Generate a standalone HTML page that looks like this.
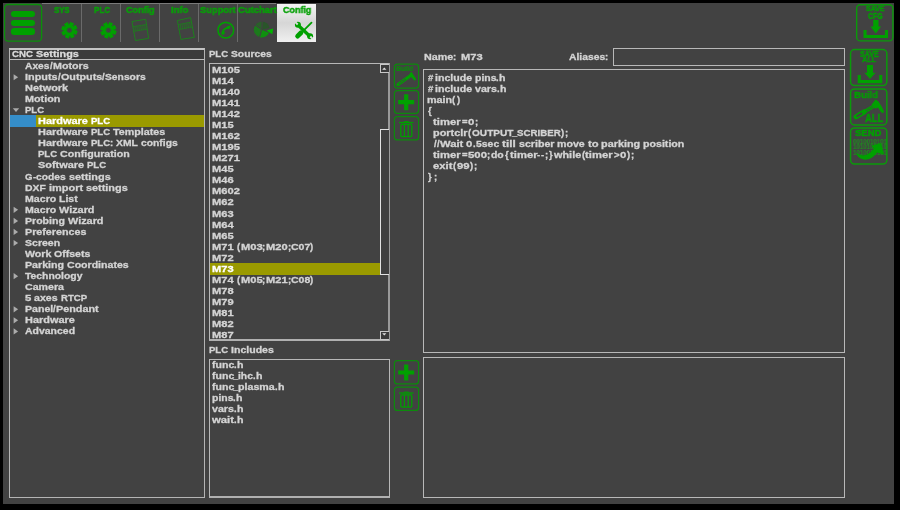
<!DOCTYPE html>
<html><head><meta charset="utf-8"><style>
html,body{margin:0;padding:0;background:#000;width:900px;height:510px;overflow:hidden}
#m{position:absolute;left:3px;top:3px;width:891px;height:501px;background:#424242}
.r{position:absolute}
.clip{position:absolute;overflow:hidden}
.t{position:absolute;white-space:nowrap;font-family:"Liberation Sans",sans-serif;font-weight:bold;transform-origin:0 0;-webkit-text-stroke:0.3px currentColor;will-change:transform}
svg{position:absolute;left:0;top:0}
</style></head><body>
<div id="m"></div>
<div class="r" style="left:42px;top:3px;width:234px;height:1px;background:#7a7a7a"></div><div class="r" style="left:10.5px;top:10.7px;width:24.5px;height:6.3px;background:#00a000;border-radius:3.2px"></div><div class="r" style="left:10.5px;top:19.5px;width:24.5px;height:6.3px;background:#00a000;border-radius:3.2px"></div><div class="r" style="left:10.5px;top:28.4px;width:24.5px;height:6.3px;background:#00a000;border-radius:3.2px"></div><div class="r" style="left:81px;top:4px;width:1px;height:38px;background:#6a6a6a"></div><div class="r" style="left:120px;top:4px;width:1px;height:38px;background:#6a6a6a"></div><div class="r" style="left:159px;top:4px;width:1px;height:38px;background:#6a6a6a"></div><div class="r" style="left:198px;top:4px;width:1px;height:38px;background:#6a6a6a"></div><div class="r" style="left:237px;top:4px;width:1px;height:38px;background:#6a6a6a"></div><div class="r" style="left:276.5px;top:4px;width:39.5px;height:38px;background:linear-gradient(#f4f4f4,#d6d6d6 50%,#f0f0f0)"></div><div class="t" style="left:53.80px;top:4.66px;font-size:9.74px;line-height:9.74px;color:#08a008;transform:scaleX(0.7973);-webkit-text-stroke:0.45px currentColor">SYS</div><div class="t" style="left:94.20px;top:4.66px;font-size:9.74px;line-height:9.74px;color:#08a008;transform:scaleX(0.8230);-webkit-text-stroke:0.45px currentColor">PLC</div><div class="t" style="left:126.10px;top:4.66px;font-size:9.74px;line-height:9.74px;color:#08a008;transform:scaleX(0.9298);-webkit-text-stroke:0.45px currentColor">Config</div><div class="t" style="left:171.10px;top:4.66px;font-size:9.74px;line-height:9.74px;color:#08a008;transform:scaleX(0.9652);-webkit-text-stroke:0.45px currentColor">Info</div><div class="t" style="left:200.40px;top:4.66px;font-size:9.74px;line-height:9.74px;color:#08a008;transform:scaleX(0.9554);-webkit-text-stroke:0.45px currentColor">Support</div><div class="t" style="left:237.80px;top:4.66px;font-size:9.74px;line-height:9.74px;color:#08a008;transform:scaleX(0.9685);-webkit-text-stroke:0.45px currentColor">Cutchart</div><div class="t" style="left:282.50px;top:4.66px;font-size:9.74px;line-height:9.74px;color:#08a008;transform:scaleX(0.9200);-webkit-text-stroke:0.45px currentColor">Config</div><div class="t" style="left:865.70px;top:5.38px;font-size:7.70px;line-height:7.70px;color:#00a000;transform:scaleX(0.9069);-webkit-text-stroke:0.42px currentColor">SAVE</div><div class="t" style="left:867.90px;top:11.86px;font-size:8.43px;line-height:8.43px;color:#00a000;transform:scaleX(0.8155);-webkit-text-stroke:0.42px currentColor">CFG</div><div class="r" style="left:9px;top:48px;width:196px;height:450px;border:1px solid #b4b4b4;border-top:2px solid #c4c4c4;box-sizing:border-box"></div><div class="r" style="left:10px;top:50px;width:194px;height:9px;background:#3b3b3b"></div><div class="r" style="left:10px;top:59px;width:194px;height:1px;background:#bdbdbd"></div><div class="clip" style="left:10px;top:49px;width:193px;height:10px"><div class="t" style="left:2.00px;top:0.00px;font-size:9.5px;line-height:9.5px;color:#dcdcdc;transform:scaleX(1.0158)">CNC</div><div class="t" style="left:25.88px;top:0.00px;font-size:9.5px;line-height:9.5px;color:#dcdcdc;transform:scaleX(1.1427)">Settings</div></div><div class="t" style="left:25.00px;top:61.00px;font-size:9.5px;line-height:9.5px;color:#d4d4d4;transform:scaleX(1.0755)">Axes</div><div class="t" style="left:49.56px;top:61px;font-size:9.5px;line-height:9.5px;color:#d4d4d4">/</div><div class="t" style="left:52.52px;top:61.00px;font-size:9.5px;line-height:9.5px;color:#d4d4d4;transform:scaleX(1.1276)">Motors</div><div class="t" style="left:25.00px;top:72.00px;font-size:9.5px;line-height:9.5px;color:#d4d4d4;transform:scaleX(1.1413)">Inputs</div><div class="t" style="left:57.59px;top:72px;font-size:9.5px;line-height:9.5px;color:#d4d4d4">/</div><div class="t" style="left:60.55px;top:72.00px;font-size:9.5px;line-height:9.5px;color:#d4d4d4;transform:scaleX(1.1315)">Outputs</div><div class="t" style="left:101.74px;top:72px;font-size:9.5px;line-height:9.5px;color:#d4d4d4">/</div><div class="t" style="left:104.71px;top:72.00px;font-size:9.5px;line-height:9.5px;color:#d4d4d4;transform:scaleX(1.0843)">Sensors</div><div class="t" style="left:25.00px;top:83.00px;font-size:9.5px;line-height:9.5px;color:#d4d4d4;transform:scaleX(1.1527)">Network</div><div class="t" style="left:25.00px;top:94.00px;font-size:9.5px;line-height:9.5px;color:#d4d4d4;transform:scaleX(1.1373)">Motion</div><div class="t" style="left:25.00px;top:105.00px;font-size:9.5px;line-height:9.5px;color:#d4d4d4;transform:scaleX(1.0046)">PLC</div><div class="r" style="left:10px;top:115px;width:26px;height:11.5px;background:#358dc8"></div><div class="r" style="left:36px;top:115px;width:168px;height:11.5px;background:#9a9a00"></div><div class="t" style="left:38.00px;top:116.00px;font-size:9.5px;line-height:9.5px;color:#ffffff;transform:scaleX(1.1504)">Hardware</div><div class="t" style="left:90.55px;top:116.00px;font-size:9.5px;line-height:9.5px;color:#ffffff;transform:scaleX(1.0046)">PLC</div><div class="t" style="left:38.00px;top:127.00px;font-size:9.5px;line-height:9.5px;color:#d4d4d4;transform:scaleX(1.1504)">Hardware</div><div class="t" style="left:90.55px;top:127.00px;font-size:9.5px;line-height:9.5px;color:#d4d4d4;transform:scaleX(1.0046)">PLC</div><div class="t" style="left:112.62px;top:127.00px;font-size:9.5px;line-height:9.5px;color:#d4d4d4;transform:scaleX(1.1279)">Templates</div><div class="t" style="left:38.00px;top:138.00px;font-size:9.5px;line-height:9.5px;color:#d4d4d4;transform:scaleX(1.1504)">Hardware</div><div class="t" style="left:90.55px;top:138.00px;font-size:9.5px;line-height:9.5px;color:#d4d4d4;transform:scaleX(1.0046)">PLC</div><div class="t" style="left:109.70px;top:138px;font-size:9.5px;line-height:9.5px;color:#d4d4d4">:</div><div class="t" style="left:116.22px;top:138.00px;font-size:9.5px;line-height:9.5px;color:#d4d4d4;transform:scaleX(1.0873)">XML</div><div class="t" style="left:140.98px;top:138.00px;font-size:9.5px;line-height:9.5px;color:#d4d4d4;transform:scaleX(1.0861)">configs</div><div class="t" style="left:38.00px;top:149.00px;font-size:9.5px;line-height:9.5px;color:#d4d4d4;transform:scaleX(1.0046)">PLC</div><div class="t" style="left:60.07px;top:149.00px;font-size:9.5px;line-height:9.5px;color:#d4d4d4;transform:scaleX(1.1203)">Configuration</div><div class="t" style="left:38.00px;top:160.00px;font-size:9.5px;line-height:9.5px;color:#d4d4d4;transform:scaleX(1.1511)">Software</div><div class="t" style="left:86.95px;top:160.00px;font-size:9.5px;line-height:9.5px;color:#d4d4d4;transform:scaleX(1.0046)">PLC</div><div class="t" style="left:25.00px;top:172.00px;font-size:9.5px;line-height:9.5px;color:#d4d4d4;transform:scaleX(1.0078)">G</div><div class="t" style="left:32.67px;top:172px;font-size:9.5px;line-height:9.5px;color:#d4d4d4">-</div><div class="t" style="left:36.12px;top:172.00px;font-size:9.5px;line-height:9.5px;color:#d4d4d4;transform:scaleX(1.0801)">codes</div><div class="t" style="left:68.68px;top:172.00px;font-size:9.5px;line-height:9.5px;color:#d4d4d4;transform:scaleX(1.1446)">settings</div><div class="t" style="left:25.00px;top:183.00px;font-size:9.5px;line-height:9.5px;color:#d4d4d4;transform:scaleX(1.0906)">DXF</div><div class="t" style="left:48.69px;top:183.00px;font-size:9.5px;line-height:9.5px;color:#d4d4d4;transform:scaleX(1.1539)">import</div><div class="t" style="left:85.65px;top:183.00px;font-size:9.5px;line-height:9.5px;color:#d4d4d4;transform:scaleX(1.1446)">settings</div><div class="t" style="left:25.00px;top:194.00px;font-size:9.5px;line-height:9.5px;color:#d4d4d4;transform:scaleX(1.1163)">Macro</div><div class="t" style="left:59.12px;top:194.00px;font-size:9.5px;line-height:9.5px;color:#d4d4d4;transform:scaleX(1.1029)">List</div><div class="t" style="left:25.00px;top:205.00px;font-size:9.5px;line-height:9.5px;color:#d4d4d4;transform:scaleX(1.1163)">Macro</div><div class="t" style="left:59.12px;top:205.00px;font-size:9.5px;line-height:9.5px;color:#d4d4d4;transform:scaleX(1.1427)">Wizard</div><div class="t" style="left:25.00px;top:216.00px;font-size:9.5px;line-height:9.5px;color:#d4d4d4;transform:scaleX(1.1122)">Probing</div><div class="t" style="left:67.73px;top:216.00px;font-size:9.5px;line-height:9.5px;color:#d4d4d4;transform:scaleX(1.1427)">Wizard</div><div class="t" style="left:25.00px;top:227.00px;font-size:9.5px;line-height:9.5px;color:#d4d4d4;transform:scaleX(1.1285)">Preferences</div><div class="t" style="left:25.00px;top:238.00px;font-size:9.5px;line-height:9.5px;color:#d4d4d4;transform:scaleX(1.1092)">Screen</div><div class="t" style="left:25.00px;top:249.00px;font-size:9.5px;line-height:9.5px;color:#d4d4d4;transform:scaleX(1.1206)">Work</div><div class="t" style="left:54.35px;top:249.00px;font-size:9.5px;line-height:9.5px;color:#d4d4d4;transform:scaleX(1.1106)">Offsets</div><div class="t" style="left:25.00px;top:260.00px;font-size:9.5px;line-height:9.5px;color:#d4d4d4;transform:scaleX(1.1220)">Parking</div><div class="t" style="left:66.92px;top:260.00px;font-size:9.5px;line-height:9.5px;color:#d4d4d4;transform:scaleX(1.1127)">Coordinates</div><div class="t" style="left:25.00px;top:271.00px;font-size:9.5px;line-height:9.5px;color:#d4d4d4;transform:scaleX(1.0914)">Technology</div><div class="t" style="left:25.00px;top:282.00px;font-size:9.5px;line-height:9.5px;color:#d4d4d4;transform:scaleX(1.1184)">Camera</div><div class="t" style="left:25.00px;top:293.00px;font-size:9.5px;line-height:9.5px;color:#d4d4d4;transform:scaleX(1.1948)">5</div><div class="t" style="left:34.40px;top:293.00px;font-size:9.5px;line-height:9.5px;color:#d4d4d4;transform:scaleX(1.1132)">axes</div><div class="t" style="left:60.87px;top:293.00px;font-size:9.5px;line-height:9.5px;color:#d4d4d4;transform:scaleX(1.0082)">RTCP</div><div class="t" style="left:25.00px;top:304.00px;font-size:9.5px;line-height:9.5px;color:#d4d4d4;transform:scaleX(1.1145)">Panel</div><div class="t" style="left:53.35px;top:304px;font-size:9.5px;line-height:9.5px;color:#d4d4d4">/</div><div class="t" style="left:56.31px;top:304.00px;font-size:9.5px;line-height:9.5px;color:#d4d4d4;transform:scaleX(1.1386)">Pendant</div><div class="t" style="left:25.00px;top:315.00px;font-size:9.5px;line-height:9.5px;color:#d4d4d4;transform:scaleX(1.1504)">Hardware</div><div class="t" style="left:25.00px;top:326.00px;font-size:9.5px;line-height:9.5px;color:#d4d4d4;transform:scaleX(1.1019)">Advanced</div><div class="t" style="left:209.40px;top:49.00px;font-size:9.5px;line-height:9.5px;color:#d4d4d4;transform:scaleX(1.0046)">PLC</div><div class="t" style="left:231.47px;top:49.00px;font-size:9.5px;line-height:9.5px;color:#d4d4d4;transform:scaleX(1.0837)">Sources</div><div class="r" style="left:208.5px;top:63px;width:181px;height:277.5px;border:1px solid #b8b8b8;border-right:2px solid #9a9a9a;border-bottom:2px solid #b0b0b0;box-sizing:border-box"></div><div class="clip" style="left:209.5px;top:64px;width:178px;height:275px"><div class="t" style="left:2.50px;top:1.00px;font-size:9.5px;line-height:9.5px;color:#d4d4d4;transform:scaleX(1.1768)">M105</div><div class="t" style="left:2.50px;top:12.00px;font-size:9.5px;line-height:9.5px;color:#d4d4d4;transform:scaleX(1.1717)">M14</div><div class="t" style="left:2.50px;top:23.00px;font-size:9.5px;line-height:9.5px;color:#d4d4d4;transform:scaleX(1.1768)">M140</div><div class="t" style="left:2.50px;top:34.00px;font-size:9.5px;line-height:9.5px;color:#d4d4d4;transform:scaleX(1.1768)">M141</div><div class="t" style="left:2.50px;top:45.00px;font-size:9.5px;line-height:9.5px;color:#d4d4d4;transform:scaleX(1.1768)">M142</div><div class="t" style="left:2.50px;top:56.00px;font-size:9.5px;line-height:9.5px;color:#d4d4d4;transform:scaleX(1.1717)">M15</div><div class="t" style="left:2.50px;top:67.00px;font-size:9.5px;line-height:9.5px;color:#d4d4d4;transform:scaleX(1.1768)">M162</div><div class="t" style="left:2.50px;top:78.00px;font-size:9.5px;line-height:9.5px;color:#d4d4d4;transform:scaleX(1.1768)">M195</div><div class="t" style="left:2.50px;top:89.00px;font-size:9.5px;line-height:9.5px;color:#d4d4d4;transform:scaleX(1.1768)">M271</div><div class="t" style="left:2.50px;top:100.00px;font-size:9.5px;line-height:9.5px;color:#d4d4d4;transform:scaleX(1.1717)">M45</div><div class="t" style="left:2.50px;top:111.00px;font-size:9.5px;line-height:9.5px;color:#d4d4d4;transform:scaleX(1.1717)">M46</div><div class="t" style="left:2.50px;top:122.00px;font-size:9.5px;line-height:9.5px;color:#d4d4d4;transform:scaleX(1.1768)">M602</div><div class="t" style="left:2.50px;top:133.00px;font-size:9.5px;line-height:9.5px;color:#d4d4d4;transform:scaleX(1.1717)">M62</div><div class="t" style="left:2.50px;top:145.00px;font-size:9.5px;line-height:9.5px;color:#d4d4d4;transform:scaleX(1.1717)">M63</div><div class="t" style="left:2.50px;top:156.00px;font-size:9.5px;line-height:9.5px;color:#d4d4d4;transform:scaleX(1.1717)">M64</div><div class="t" style="left:2.50px;top:167.00px;font-size:9.5px;line-height:9.5px;color:#d4d4d4;transform:scaleX(1.1717)">M65</div><div class="t" style="left:2.50px;top:178.00px;font-size:9.5px;line-height:9.5px;color:#d4d4d4;transform:scaleX(1.1717)">M71</div><div class="t" style="left:27.59px;top:178px;font-size:9.5px;line-height:9.5px;color:#d4d4d4">(</div><div class="t" style="left:31.23px;top:178.00px;font-size:9.5px;line-height:9.5px;color:#d4d4d4;transform:scaleX(1.1717)">M03</div><div class="t" style="left:52.93px;top:178px;font-size:9.5px;line-height:9.5px;color:#d4d4d4">;</div><div class="t" style="left:56.31px;top:178.00px;font-size:9.5px;line-height:9.5px;color:#d4d4d4;transform:scaleX(1.1717)">M20</div><div class="t" style="left:78.01px;top:178px;font-size:9.5px;line-height:9.5px;color:#d4d4d4">;</div><div class="t" style="left:81.39px;top:178.00px;font-size:9.5px;line-height:9.5px;color:#d4d4d4;transform:scaleX(1.1064)">C07</div><div class="t" style="left:100.99px;top:178px;font-size:9.5px;line-height:9.5px;color:#d4d4d4">)</div><div class="t" style="left:2.50px;top:189.00px;font-size:9.5px;line-height:9.5px;color:#d4d4d4;transform:scaleX(1.1717)">M72</div><div class="r" style="left:0.5px;top:199.30px;width:170px;height:11.4px;background:#9a9a00"></div><div class="t" style="left:2.50px;top:200.00px;font-size:9.5px;line-height:9.5px;color:#ffffff;transform:scaleX(1.1717)">M73</div><div class="t" style="left:2.50px;top:211.00px;font-size:9.5px;line-height:9.5px;color:#d4d4d4;transform:scaleX(1.1717)">M74</div><div class="t" style="left:27.59px;top:211px;font-size:9.5px;line-height:9.5px;color:#d4d4d4">(</div><div class="t" style="left:31.23px;top:211.00px;font-size:9.5px;line-height:9.5px;color:#d4d4d4;transform:scaleX(1.1717)">M05</div><div class="t" style="left:52.93px;top:211px;font-size:9.5px;line-height:9.5px;color:#d4d4d4">;</div><div class="t" style="left:56.31px;top:211.00px;font-size:9.5px;line-height:9.5px;color:#d4d4d4;transform:scaleX(1.1717)">M21</div><div class="t" style="left:78.01px;top:211px;font-size:9.5px;line-height:9.5px;color:#d4d4d4">;</div><div class="t" style="left:81.39px;top:211.00px;font-size:9.5px;line-height:9.5px;color:#d4d4d4;transform:scaleX(1.1064)">C08</div><div class="t" style="left:100.99px;top:211px;font-size:9.5px;line-height:9.5px;color:#d4d4d4">)</div><div class="t" style="left:2.50px;top:222.00px;font-size:9.5px;line-height:9.5px;color:#d4d4d4;transform:scaleX(1.1717)">M78</div><div class="t" style="left:2.50px;top:233.00px;font-size:9.5px;line-height:9.5px;color:#d4d4d4;transform:scaleX(1.1717)">M79</div><div class="t" style="left:2.50px;top:244.00px;font-size:9.5px;line-height:9.5px;color:#d4d4d4;transform:scaleX(1.1717)">M81</div><div class="t" style="left:2.50px;top:255.00px;font-size:9.5px;line-height:9.5px;color:#d4d4d4;transform:scaleX(1.1717)">M82</div><div class="t" style="left:2.50px;top:266.00px;font-size:9.5px;line-height:9.5px;color:#d4d4d4;transform:scaleX(1.1717)">M87</div></div><div class="r" style="left:380px;top:64px;width:8.5px;height:9px;border:1px solid #c8c8c8;border-right:0;box-sizing:border-box;background:#3a3a3a"></div><div class="r" style="left:380px;top:129px;width:8.5px;height:145.5px;border:1.2px solid #e2e2e2;border-right:0;box-sizing:border-box;background:#3f3f3f"></div><div class="r" style="left:380px;top:331px;width:8.5px;height:8.5px;border:1px solid #c8c8c8;border-right:0;box-sizing:border-box;background:#3a3a3a"></div><div class="t" style="left:396.00px;top:65.20px;font-size:7.56px;line-height:7.56px;color:#0c8c0c;transform:scaleX(0.9130);-webkit-text-stroke:0.2px currentColor">Build</div><div class="t" style="left:209.00px;top:345.00px;font-size:9.5px;line-height:9.5px;color:#d4d4d4;transform:scaleX(1.0046)">PLC</div><div class="t" style="left:231.07px;top:345.00px;font-size:9.5px;line-height:9.5px;color:#d4d4d4;transform:scaleX(1.1113)">Includes</div><div class="r" style="left:208.5px;top:359px;width:181.5px;height:139px;border:1px solid #b8b8b8;border-bottom:2px solid #b0b0b0;box-sizing:border-box"></div><div class="t" style="left:211.50px;top:360.00px;font-size:9.5px;line-height:9.5px;color:#d4d4d4;transform:scaleX(1.1091)">func</div><div class="t" style="left:233.95px;top:360px;font-size:9.5px;line-height:9.5px;color:#d4d4d4">.</div><div class="t" style="left:236.98px;top:360.00px;font-size:9.5px;line-height:9.5px;color:#d4d4d4;transform:scaleX(1.1129)">h</div><div class="t" style="left:211.50px;top:371.00px;font-size:9.5px;line-height:9.5px;color:#d4d4d4;transform:scaleX(1.1091)">func</div><div class="t" style="left:233.17px;top:371px;font-size:9.5px;line-height:9.5px;color:#d4d4d4">_</div><div class="t" style="left:238.06px;top:371.00px;font-size:9.5px;line-height:9.5px;color:#d4d4d4;transform:scaleX(1.0889)">ihc</div><div class="t" style="left:253.28px;top:371px;font-size:9.5px;line-height:9.5px;color:#d4d4d4">.</div><div class="t" style="left:256.31px;top:371.00px;font-size:9.5px;line-height:9.5px;color:#d4d4d4;transform:scaleX(1.1129)">h</div><div class="t" style="left:211.50px;top:382.00px;font-size:9.5px;line-height:9.5px;color:#d4d4d4;transform:scaleX(1.1091)">func</div><div class="t" style="left:233.17px;top:382px;font-size:9.5px;line-height:9.5px;color:#d4d4d4">_</div><div class="t" style="left:238.06px;top:382.00px;font-size:9.5px;line-height:9.5px;color:#d4d4d4;transform:scaleX(1.1210)">plasma</div><div class="t" style="left:274.86px;top:382px;font-size:9.5px;line-height:9.5px;color:#d4d4d4">.</div><div class="t" style="left:277.89px;top:382.00px;font-size:9.5px;line-height:9.5px;color:#d4d4d4;transform:scaleX(1.1129)">h</div><div class="t" style="left:211.50px;top:393.00px;font-size:9.5px;line-height:9.5px;color:#d4d4d4;transform:scaleX(1.0990)">pins</div><div class="t" style="left:233.18px;top:393px;font-size:9.5px;line-height:9.5px;color:#d4d4d4">.</div><div class="t" style="left:236.21px;top:393.00px;font-size:9.5px;line-height:9.5px;color:#d4d4d4;transform:scaleX(1.1129)">h</div><div class="t" style="left:211.50px;top:404.00px;font-size:9.5px;line-height:9.5px;color:#d4d4d4;transform:scaleX(1.1208)">vars</div><div class="t" style="left:233.62px;top:404px;font-size:9.5px;line-height:9.5px;color:#d4d4d4">.</div><div class="t" style="left:236.65px;top:404.00px;font-size:9.5px;line-height:9.5px;color:#d4d4d4;transform:scaleX(1.1129)">h</div><div class="t" style="left:211.50px;top:415.00px;font-size:9.5px;line-height:9.5px;color:#d4d4d4;transform:scaleX(1.1881)">wait</div><div class="t" style="left:233.67px;top:415px;font-size:9.5px;line-height:9.5px;color:#d4d4d4">.</div><div class="t" style="left:236.69px;top:415.00px;font-size:9.5px;line-height:9.5px;color:#d4d4d4;transform:scaleX(1.1129)">h</div><div class="t" style="left:423.60px;top:52.00px;font-size:9.5px;line-height:9.5px;color:#d4d4d4;transform:scaleX(1.1331)">Name</div><div class="t" style="left:452.91px;top:52px;font-size:9.5px;line-height:9.5px;color:#d4d4d4">:</div><div class="t" style="left:460.90px;top:52.00px;font-size:9.5px;line-height:9.5px;color:#d4d4d4;transform:scaleX(1.1717)">M73</div><div class="t" style="left:569.00px;top:52.00px;font-size:9.5px;line-height:9.5px;color:#d4d4d4;transform:scaleX(1.0914)">Aliases</div><div class="t" style="left:605.25px;top:52px;font-size:9.5px;line-height:9.5px;color:#d4d4d4">:</div><div class="r" style="left:613px;top:48px;width:232px;height:17.5px;border:1.4px solid #b8b8b8;box-sizing:border-box"></div><div class="r" style="left:423px;top:69px;width:422px;height:283.5px;border:1.4px solid #b8b8b8;box-sizing:border-box"></div><div class="t" style="left:428.13px;top:73px;font-size:9.5px;line-height:9.5px;color:#d4d4d4">#</div><div class="t" style="left:434.54px;top:73.00px;font-size:9.5px;line-height:9.5px;color:#d4d4d4;transform:scaleX(1.1175)">include</div><div class="t" style="left:474.54px;top:73.00px;font-size:9.5px;line-height:9.5px;color:#d4d4d4;transform:scaleX(1.0990)">pins</div><div class="t" style="left:496.22px;top:73px;font-size:9.5px;line-height:9.5px;color:#d4d4d4">.</div><div class="t" style="left:499.25px;top:73.00px;font-size:9.5px;line-height:9.5px;color:#d4d4d4;transform:scaleX(1.1129)">h</div><div class="t" style="left:428.13px;top:84px;font-size:9.5px;line-height:9.5px;color:#d4d4d4">#</div><div class="t" style="left:434.54px;top:84.00px;font-size:9.5px;line-height:9.5px;color:#d4d4d4;transform:scaleX(1.1175)">include</div><div class="t" style="left:474.54px;top:84.00px;font-size:9.5px;line-height:9.5px;color:#d4d4d4;transform:scaleX(1.1208)">vars</div><div class="t" style="left:496.67px;top:84px;font-size:9.5px;line-height:9.5px;color:#d4d4d4">.</div><div class="t" style="left:499.69px;top:84.00px;font-size:9.5px;line-height:9.5px;color:#d4d4d4;transform:scaleX(1.1129)">h</div><div class="t" style="left:427.00px;top:95.00px;font-size:9.5px;line-height:9.5px;color:#d4d4d4;transform:scaleX(1.1340)">main</div><div class="t" style="left:452.42px;top:95px;font-size:9.5px;line-height:9.5px;color:#d4d4d4">(</div><div class="t" style="left:456.53px;top:95px;font-size:9.5px;line-height:9.5px;color:#d4d4d4">)</div><div class="t" style="left:428.36px;top:106px;font-size:9.5px;line-height:9.5px;color:#d4d4d4">{</div><div class="t" style="left:433.30px;top:117.00px;font-size:9.5px;line-height:9.5px;color:#d4d4d4;transform:scaleX(1.1850)">timer</div><div class="t" style="left:461.60px;top:117px;font-size:9.5px;line-height:9.5px;color:#d4d4d4">=</div><div class="t" style="left:468.15px;top:117.00px;font-size:9.5px;line-height:9.5px;color:#d4d4d4;transform:scaleX(1.1948)">0</div><div class="t" style="left:474.63px;top:117px;font-size:9.5px;line-height:9.5px;color:#d4d4d4">;</div><div class="t" style="left:433.30px;top:128.00px;font-size:9.5px;line-height:9.5px;color:#d4d4d4;transform:scaleX(1.1466)">portclr</div><div class="t" style="left:468.00px;top:128px;font-size:9.5px;line-height:9.5px;color:#d4d4d4">(</div><div class="t" style="left:471.64px;top:128.00px;font-size:9.5px;line-height:9.5px;color:#d4d4d4;transform:scaleX(1.0619)">OUTPUT</div><div class="t" style="left:512.39px;top:128px;font-size:9.5px;line-height:9.5px;color:#d4d4d4">_</div><div class="t" style="left:517.28px;top:128.00px;font-size:9.5px;line-height:9.5px;color:#d4d4d4;transform:scaleX(1.0209)">SCRIBER</div><div class="t" style="left:561.06px;top:128px;font-size:9.5px;line-height:9.5px;color:#d4d4d4">)</div><div class="t" style="left:564.91px;top:128px;font-size:9.5px;line-height:9.5px;color:#d4d4d4">;</div><div class="t" style="left:433.62px;top:139px;font-size:9.5px;line-height:9.5px;color:#d4d4d4">/</div><div class="t" style="left:436.91px;top:139px;font-size:9.5px;line-height:9.5px;color:#d4d4d4">/</div><div class="t" style="left:439.88px;top:139.00px;font-size:9.5px;line-height:9.5px;color:#d4d4d4;transform:scaleX(1.1803)">Wait</div><div class="t" style="left:466.08px;top:139.00px;font-size:9.5px;line-height:9.5px;color:#d4d4d4;transform:scaleX(1.1948)">0</div><div class="t" style="left:472.73px;top:139px;font-size:9.5px;line-height:9.5px;color:#d4d4d4">.</div><div class="t" style="left:475.76px;top:139.00px;font-size:9.5px;line-height:9.5px;color:#d4d4d4;transform:scaleX(1.0998)">5sec</div><div class="t" style="left:501.95px;top:139.00px;font-size:9.5px;line-height:9.5px;color:#d4d4d4;transform:scaleX(1.2334)">till</div><div class="t" style="left:518.64px;top:139.00px;font-size:9.5px;line-height:9.5px;color:#d4d4d4;transform:scaleX(1.1198)">scriber</div><div class="t" style="left:556.97px;top:139.00px;font-size:9.5px;line-height:9.5px;color:#d4d4d4;transform:scaleX(1.1182)">move</div><div class="t" style="left:587.64px;top:139.00px;font-size:9.5px;line-height:9.5px;color:#d4d4d4;transform:scaleX(1.1787)">to</div><div class="t" style="left:601.26px;top:139.00px;font-size:9.5px;line-height:9.5px;color:#d4d4d4;transform:scaleX(1.1420)">parking</div><div class="t" style="left:643.26px;top:139.00px;font-size:9.5px;line-height:9.5px;color:#d4d4d4;transform:scaleX(1.1201)">position</div><div class="t" style="left:433.30px;top:150.00px;font-size:9.5px;line-height:9.5px;color:#d4d4d4;transform:scaleX(1.1850)">timer</div><div class="t" style="left:461.60px;top:150px;font-size:9.5px;line-height:9.5px;color:#d4d4d4">=</div><div class="t" style="left:468.15px;top:150.00px;font-size:9.5px;line-height:9.5px;color:#d4d4d4;transform:scaleX(1.1948)">500</div><div class="t" style="left:487.15px;top:150px;font-size:9.5px;line-height:9.5px;color:#d4d4d4">;</div><div class="t" style="left:490.54px;top:150.00px;font-size:9.5px;line-height:9.5px;color:#d4d4d4;transform:scaleX(1.0965)">do</div><div class="t" style="left:504.52px;top:150px;font-size:9.5px;line-height:9.5px;color:#d4d4d4">{</div><div class="t" style="left:509.57px;top:150.00px;font-size:9.5px;line-height:9.5px;color:#d4d4d4;transform:scaleX(1.1850)">timer</div><div class="t" style="left:537.16px;top:150px;font-size:9.5px;line-height:9.5px;color:#d4d4d4">-</div><div class="t" style="left:540.90px;top:150px;font-size:9.5px;line-height:9.5px;color:#d4d4d4">-</div><div class="t" style="left:544.56px;top:150px;font-size:9.5px;line-height:9.5px;color:#d4d4d4">;</div><div class="t" style="left:549.30px;top:150px;font-size:9.5px;line-height:9.5px;color:#d4d4d4">}</div><div class="t" style="left:554.35px;top:150.00px;font-size:9.5px;line-height:9.5px;color:#d4d4d4;transform:scaleX(1.1456)">while</div><div class="t" style="left:581.82px;top:150px;font-size:9.5px;line-height:9.5px;color:#d4d4d4">(</div><div class="t" style="left:585.46px;top:150.00px;font-size:9.5px;line-height:9.5px;color:#d4d4d4;transform:scaleX(1.1850)">timer</div><div class="t" style="left:613.77px;top:150px;font-size:9.5px;line-height:9.5px;color:#d4d4d4">&gt;</div><div class="t" style="left:620.31px;top:150.00px;font-size:9.5px;line-height:9.5px;color:#d4d4d4;transform:scaleX(1.1948)">0</div><div class="t" style="left:627.05px;top:150px;font-size:9.5px;line-height:9.5px;color:#d4d4d4">)</div><div class="t" style="left:630.90px;top:150px;font-size:9.5px;line-height:9.5px;color:#d4d4d4">;</div><div class="t" style="left:433.30px;top:161.00px;font-size:9.5px;line-height:9.5px;color:#d4d4d4;transform:scaleX(1.1883)">exit</div><div class="t" style="left:453.07px;top:161px;font-size:9.5px;line-height:9.5px;color:#d4d4d4">(</div><div class="t" style="left:456.71px;top:161.00px;font-size:9.5px;line-height:9.5px;color:#d4d4d4;transform:scaleX(1.1948)">99</div><div class="t" style="left:469.71px;top:161px;font-size:9.5px;line-height:9.5px;color:#d4d4d4">)</div><div class="t" style="left:473.57px;top:161px;font-size:9.5px;line-height:9.5px;color:#d4d4d4">;</div><div class="t" style="left:428.36px;top:172px;font-size:9.5px;line-height:9.5px;color:#d4d4d4">}</div><div class="t" style="left:433.62px;top:172px;font-size:9.5px;line-height:9.5px;color:#d4d4d4">;</div><div class="r" style="left:423px;top:356.5px;width:422px;height:141.5px;border:1.4px solid #b8b8b8;box-sizing:border-box"></div><div class="t" style="left:859.70px;top:50.04px;font-size:8.58px;line-height:8.58px;color:#00a000;transform:scaleX(0.8201);-webkit-text-stroke:0.4px currentColor">SAVE</div><div class="t" style="left:862.00px;top:56.46px;font-size:7.85px;line-height:7.85px;color:#00a000;transform:scaleX(0.9186);-webkit-text-stroke:0.4px currentColor">ALL</div><div class="t" style="left:853.80px;top:90.33px;font-size:9.88px;line-height:9.88px;color:#00a000;transform:scaleX(0.9717);-webkit-text-stroke:0.3px currentColor">Build</div><div class="t" style="left:865.00px;top:113.07px;font-size:10.90px;line-height:10.90px;color:#00a000;transform:scaleX(0.8640);-webkit-text-stroke:0.35px currentColor">ALL</div><div class="t" style="left:854.80px;top:128.83px;font-size:9.30px;line-height:9.30px;color:#00a000;transform:scaleX(1.0255);-webkit-text-stroke:0.4px currentColor">SEND</div><div class="t" style="left:852.60px;top:137.59px;font-size:6.98px;line-height:6.98px;color:#248424;transform:scaleX(0.8760);-webkit-text-stroke:0.2px currentColor">0010010101</div><div class="t" style="left:852.60px;top:143.09px;font-size:6.98px;line-height:6.98px;color:#248424;transform:scaleX(0.8760);-webkit-text-stroke:0.2px currentColor">1010101010</div><div class="t" style="left:852.60px;top:148.89px;font-size:6.98px;line-height:6.98px;color:#248424;transform:scaleX(0.8760);-webkit-text-stroke:0.2px currentColor">1010010101</div>
<svg width="900" height="510" viewBox="0 0 900 510"><rect x="4.6" y="4.5" width="37" height="36.6" rx="3.5" fill="none" stroke="#0a900a" stroke-width="1.3"/><path d="M74.80,30.46 L77.25,31.17 L76.13,34.43 L73.76,33.48 L73.10,34.23 L74.34,36.47 L71.24,37.98 L70.24,35.63 L69.24,35.70 L68.53,38.15 L65.27,37.03 L66.22,34.66 L65.47,34.00 L63.23,35.24 L61.72,32.14 L64.07,31.14 L64.00,30.14 L61.55,29.43 L62.67,26.17 L65.04,27.12 L65.70,26.37 L64.46,24.13 L67.56,22.62 L68.56,24.97 L69.56,24.90 L70.27,22.45 L73.53,23.57 L72.58,25.94 L73.33,26.60 L75.57,25.36 L77.08,28.46 L74.73,29.46 Z M72.20,30.30 a2.8,2.8 0 1,0 -5.60,0 a2.8,2.8 0 1,0 5.60,0 Z" fill="#00a000" fill-rule="evenodd" stroke="#00a000" stroke-width="0.8" stroke-linejoin="round"/><path d="M113.80,30.46 L116.25,31.17 L115.13,34.43 L112.76,33.48 L112.10,34.23 L113.34,36.47 L110.24,37.98 L109.24,35.63 L108.24,35.70 L107.53,38.15 L104.27,37.03 L105.22,34.66 L104.47,34.00 L102.23,35.24 L100.72,32.14 L103.07,31.14 L103.00,30.14 L100.55,29.43 L101.67,26.17 L104.04,27.12 L104.70,26.37 L103.46,24.13 L106.56,22.62 L107.56,24.97 L108.56,24.90 L109.27,22.45 L112.53,23.57 L111.58,25.94 L112.33,26.60 L114.57,25.36 L116.08,28.46 L113.73,29.46 Z M111.20,30.30 a2.8,2.8 0 1,0 -5.60,0 a2.8,2.8 0 1,0 5.60,0 Z" fill="#00a000" fill-rule="evenodd" stroke="#00a000" stroke-width="0.8" stroke-linejoin="round"/><polygon points="132,21.5 145.7,19.3 148.6,38.4 135.4,40.5" fill="none" stroke="#168a16" stroke-width="0.85"/><line x1="132.92" y1="26.63" x2="146.48" y2="24.46" stroke="#168a16" stroke-width="0.65"/><line x1="133.77" y1="31.38" x2="147.21" y2="29.23" stroke="#168a16" stroke-width="0.65"/><line x1="134.86" y1="26.32" x2="135.69" y2="31.07" stroke="#168a16" stroke-width="0.65"/><line x1="136.79" y1="26.01" x2="137.61" y2="30.77" stroke="#168a16" stroke-width="0.65"/><line x1="138.73" y1="25.70" x2="139.53" y2="30.46" stroke="#168a16" stroke-width="0.65"/><line x1="140.67" y1="25.39" x2="141.45" y2="30.15" stroke="#168a16" stroke-width="0.65"/><line x1="142.61" y1="25.08" x2="143.37" y2="29.85" stroke="#168a16" stroke-width="0.65"/><line x1="144.55" y1="24.77" x2="145.29" y2="29.54" stroke="#168a16" stroke-width="0.65"/><polygon points="177.4,20.5 190.6,17.6 194.4,37.3 180.9,39.4" fill="none" stroke="#168a16" stroke-width="0.85"/><line x1="178.17" y1="24.66" x2="191.44" y2="21.93" stroke="#168a16" stroke-width="0.65"/><line x1="179.08" y1="29.57" x2="192.42" y2="27.06" stroke="#168a16" stroke-width="0.65"/><line x1="180.07" y1="24.27" x2="180.99" y2="29.21" stroke="#168a16" stroke-width="0.65"/><line x1="181.96" y1="23.88" x2="182.89" y2="28.85" stroke="#168a16" stroke-width="0.65"/><line x1="183.86" y1="23.49" x2="184.80" y2="28.49" stroke="#168a16" stroke-width="0.65"/><line x1="185.75" y1="23.10" x2="186.71" y2="28.13" stroke="#168a16" stroke-width="0.65"/><line x1="187.65" y1="22.71" x2="188.61" y2="27.77" stroke="#168a16" stroke-width="0.65"/><line x1="189.54" y1="22.32" x2="190.52" y2="27.42" stroke="#168a16" stroke-width="0.65"/><circle cx="225.8" cy="30.2" r="7.8" fill="none" stroke="#00a000" stroke-width="1.6"/><path d="M222.7,33.2 Q222.2,29.6 228.4,27.2" fill="none" stroke="#00a000" stroke-width="1.9" stroke-linecap="round"/><ellipse cx="223.1" cy="33" rx="1.9" ry="1.5" transform="rotate(-40 223.1 33)" fill="#00a000"/><ellipse cx="228.6" cy="27.4" rx="1.9" ry="1.5" transform="rotate(-40 228.6 27.4)" fill="#00a000"/><path d="M261.8,29.7 L261.80,21.80 A7.9,7.9 0 0,1 269.47,27.79 Z" fill="#2a552a"/><path d="M261.8,29.7 L255.17,25.40 A7.9,7.9 0 0,1 261.80,21.80 Z" fill="#2a602a"/><path d="M261.8,29.7 L259.36,37.21 A7.9,7.9 0 0,1 255.17,25.40 Z" fill="#1c7a1c"/><path d="M261.8,29.7 L269.12,32.66 A7.9,7.9 0 0,1 259.36,37.21 Z" fill="#0e900e"/><g stroke="#424242" stroke-width="1"><line x1="261.8" y1="29.7" x2="262.4" y2="21"/><line x1="261.8" y1="29.7" x2="254.8" y2="24.6"/><line x1="261.8" y1="29.7" x2="259.3" y2="38"/></g><path d="M266.5,30.6 L273.2,28.4 L272.3,34.2 Z" fill="#00b400"/><path d="M311.5,22.6 L303.5,30.6" stroke="#00a000" stroke-width="1.8" stroke-linecap="round"/><path d="M297.6,36.1 L301.0,32.7" stroke="#00a000" stroke-width="4.8" stroke-linecap="round"/><path d="M299.2,26.2 L308.8,35.2" stroke="#00a000" stroke-width="3.3" stroke-linecap="butt"/><circle cx="297.9" cy="24.7" r="3" fill="#00a000"/><circle cx="310.1" cy="36.3" r="3" fill="#00a000"/><path d="M298.4,23.8 L296.0,21.4 L294.6,22.8 L297.0,25.2 Z" fill="#dcdcdc"/><path d="M311.0,35.8 L313.4,38.2 L312.0,39.6 L309.6,37.2 Z" fill="#e4e4e4"/><rect x="856.7" y="4.7" width="36.2" height="36.2" rx="3.5" fill="none" stroke="#0a9a0a" stroke-width="1.4"/><path d="M873.2,19.9 H878.5 V26.5 H881.1 L875.8,33.5 L870.5,26.5 H873.2 Z" fill="#00a000"/><path d="M863.5,30 H866.6 V34.9 H884.9 V30 H888 V38 H863.5 Z" fill="#00a000"/><path d="M13.6,74.15 L18.1,77.25 L13.6,80.35 Z" fill="#ababab"/><path d="M12.8,108.20 L19.2,108.20 L16,112.00 Z" fill="#ababab"/><path d="M13.6,206.75 L18.1,209.85 L13.6,212.95 Z" fill="#ababab"/><path d="M13.6,217.80 L18.1,220.90 L13.6,224.00 Z" fill="#ababab"/><path d="M13.6,228.85 L18.1,231.95 L13.6,235.05 Z" fill="#ababab"/><path d="M13.6,239.90 L18.1,243.00 L13.6,246.10 Z" fill="#ababab"/><path d="M13.6,273.05 L18.1,276.15 L13.6,279.25 Z" fill="#ababab"/><path d="M13.6,306.20 L18.1,309.30 L13.6,312.40 Z" fill="#ababab"/><path d="M13.6,317.25 L18.1,320.35 L13.6,323.45 Z" fill="#ababab"/><path d="M13.6,328.30 L18.1,331.40 L13.6,334.50 Z" fill="#ababab"/><path d="M382.2,69.8 L386.4,69.8 L384.3,67.6 Z" fill="#e0e0e0"/><path d="M382.2,333.3 L386.4,333.3 L384.3,335.5 Z" fill="#e0e0e0"/><rect x="394.40" y="64.10" width="24.20" height="24.00" rx="3" fill="none" stroke="#0c8a0c" stroke-width="1.2"/><rect x="394.40" y="90.60" width="24.20" height="22.80" rx="3" fill="none" stroke="#0c8a0c" stroke-width="1.2"/><rect x="394.40" y="116.60" width="24.20" height="23.30" rx="3" fill="none" stroke="#0c8a0c" stroke-width="1.2"/><path d="M398,84.5 L410,76" stroke="#00a000" stroke-width="3.2" stroke-linecap="round"/><path d="M399,83.7 L405.5,79.2" stroke="#424242" stroke-width="0.9" stroke-linecap="round"/><path d="M408.6,75.4 L411.3,71.5 L416.3,79.3 L414.6,80.7 L411.4,77.2 Z" fill="#00a000"/><path d="M404.09999999999997,94.2 h4.2 v5.9 h5.9 v4.2 h-5.9 v5.9 h-4.2 v-5.9 h-5.9 v-4.2 h5.9 Z" fill="#00a000"/><g fill="#00a000"><rect x="399.2" y="121.9" width="14.2" height="1.3"/><rect x="403.90000000000003" y="121.1" width="4.8" height="1"/></g><g stroke="#00a000" fill="none" stroke-width="1.3"><rect x="400.8" y="124.3" width="11" height="12.3" rx="1"/><path d="M404.40000000000003,124.5 V136.5 M408.2,124.5 V136.5" stroke-width="1.2"/></g><rect x="394.40" y="360.60" width="24.20" height="23.30" rx="3" fill="none" stroke="#0c8a0c" stroke-width="1.2"/><rect x="394.40" y="387.10" width="24.20" height="23.30" rx="3" fill="none" stroke="#0c8a0c" stroke-width="1.2"/><path d="M404.09999999999997,364.5 h4.2 v5.9 h5.9 v4.2 h-5.9 v5.9 h-4.2 v-5.9 h-5.9 v-4.2 h5.9 Z" fill="#00a000"/><g fill="#00a000"><rect x="399.2" y="392.4" width="14.2" height="1.3"/><rect x="403.90000000000003" y="391.6" width="4.8" height="1"/></g><g stroke="#00a000" fill="none" stroke-width="1.3"><rect x="400.8" y="394.8" width="11" height="12.3" rx="1"/><path d="M404.40000000000003,395 V407 M408.2,395 V407" stroke-width="1.2"/></g><rect x="850.55" y="49.55" width="36.30" height="36.00" rx="4" fill="none" stroke="#0a9a0a" stroke-width="1.5"/><rect x="850.55" y="88.95" width="36.30" height="36.00" rx="4" fill="none" stroke="#0a9a0a" stroke-width="1.5"/><rect x="850.55" y="127.95" width="36.30" height="36.10" rx="4" fill="none" stroke="#0a9a0a" stroke-width="1.5"/><path d="M867,65 H873 V72.8 H875.6 L870,79 L864.4,72.8 H867 Z" fill="#00a000"/><path d="M857.7,75 H860.8 V79.9 H879.2 V75 H882.3 V83.2 H857.7 Z" fill="#00a000"/><path d="M856,116.8 L864,112" stroke="#00a000" stroke-width="5" stroke-linecap="round"/><path d="M857.2,116.1 L863.2,112.5" stroke="#424242" stroke-width="1.9" stroke-linecap="round"/><path d="M863.5,112.3 L875,105.5" stroke="#00a000" stroke-width="3.6" stroke-linecap="round"/><path d="M866,110.9 L873,106.7" stroke="#424242" stroke-width="0.7"/><path d="M871.5,104.8 L875.5,99.5 L878.5,101.5 L882,107 L884,111.5 L882.8,113.6 L880.5,111.5 L878,107.5 L875.5,108.8 Z" fill="#00a000"/><path d="M856,152.6 C858,161 870,163 877,152.6 L884.2,154.6 L880.9,143 L871.3,145.8 L873.8,148.4 C869,155.5 861,157.5 856,152.6 Z" fill="#00a000"/></svg>
</body></html>
